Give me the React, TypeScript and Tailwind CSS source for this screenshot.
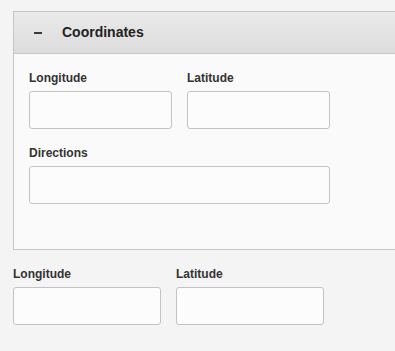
import React from 'react';

const Field: React.FC<{ label: string; width: string; className?: string }> = ({ label, width, className }) => (
  <div className={className}>
    <label className="block text-[12px] leading-[14px] font-bold text-[#333] mb-[6px]">{label}</label>
    <input
      type="text"
      className={`block h-[38px] ${width} bg-[#fcfcfc] border border-[#c3c3c3] rounded-[3px] outline-none`}
    />
  </div>
);

const App: React.FC = () => {
  return (
    <div className="w-[395px] h-[351px] overflow-hidden bg-[#f4f4f4] pt-[11px] font-['Liberation_Sans',Arial,sans-serif]">
      {/* Coordinates panel */}
      <div className="ml-[13px] w-[420px] border border-[#c6c6c6] bg-[#fafafa]">
        <div className="h-[42px] flex items-center pl-[20px] border-b border-[#c6c6c6] bg-gradient-to-b from-[#eaeaea] to-[#dcdcdc]">
          <span className="block w-[8px] h-[2px] bg-[#3a3a3a]" />
          <span className="ml-[20px] text-[14px] font-bold text-[#222]">Coordinates</span>
        </div>
        <div className="pt-[17px] pl-[15px] pb-[28px]">
          <div className="flex gap-[15px] mb-[17px]">
            <Field label="Longitude" width="w-[143px]" />
            <Field label="Latitude" width="w-[143px]" />
          </div>
          <div className="mb-[17px]">
            <Field label="Directions" width="w-[301px]" />
          </div>
        </div>
      </div>

      {/* Plain fields */}
      <div className="flex gap-[15px] pl-[13px] pt-[17px]">
        <Field label="Longitude" width="w-[148px]" />
        <Field label="Latitude" width="w-[148px]" />
      </div>
    </div>
  );
};

export default App;
